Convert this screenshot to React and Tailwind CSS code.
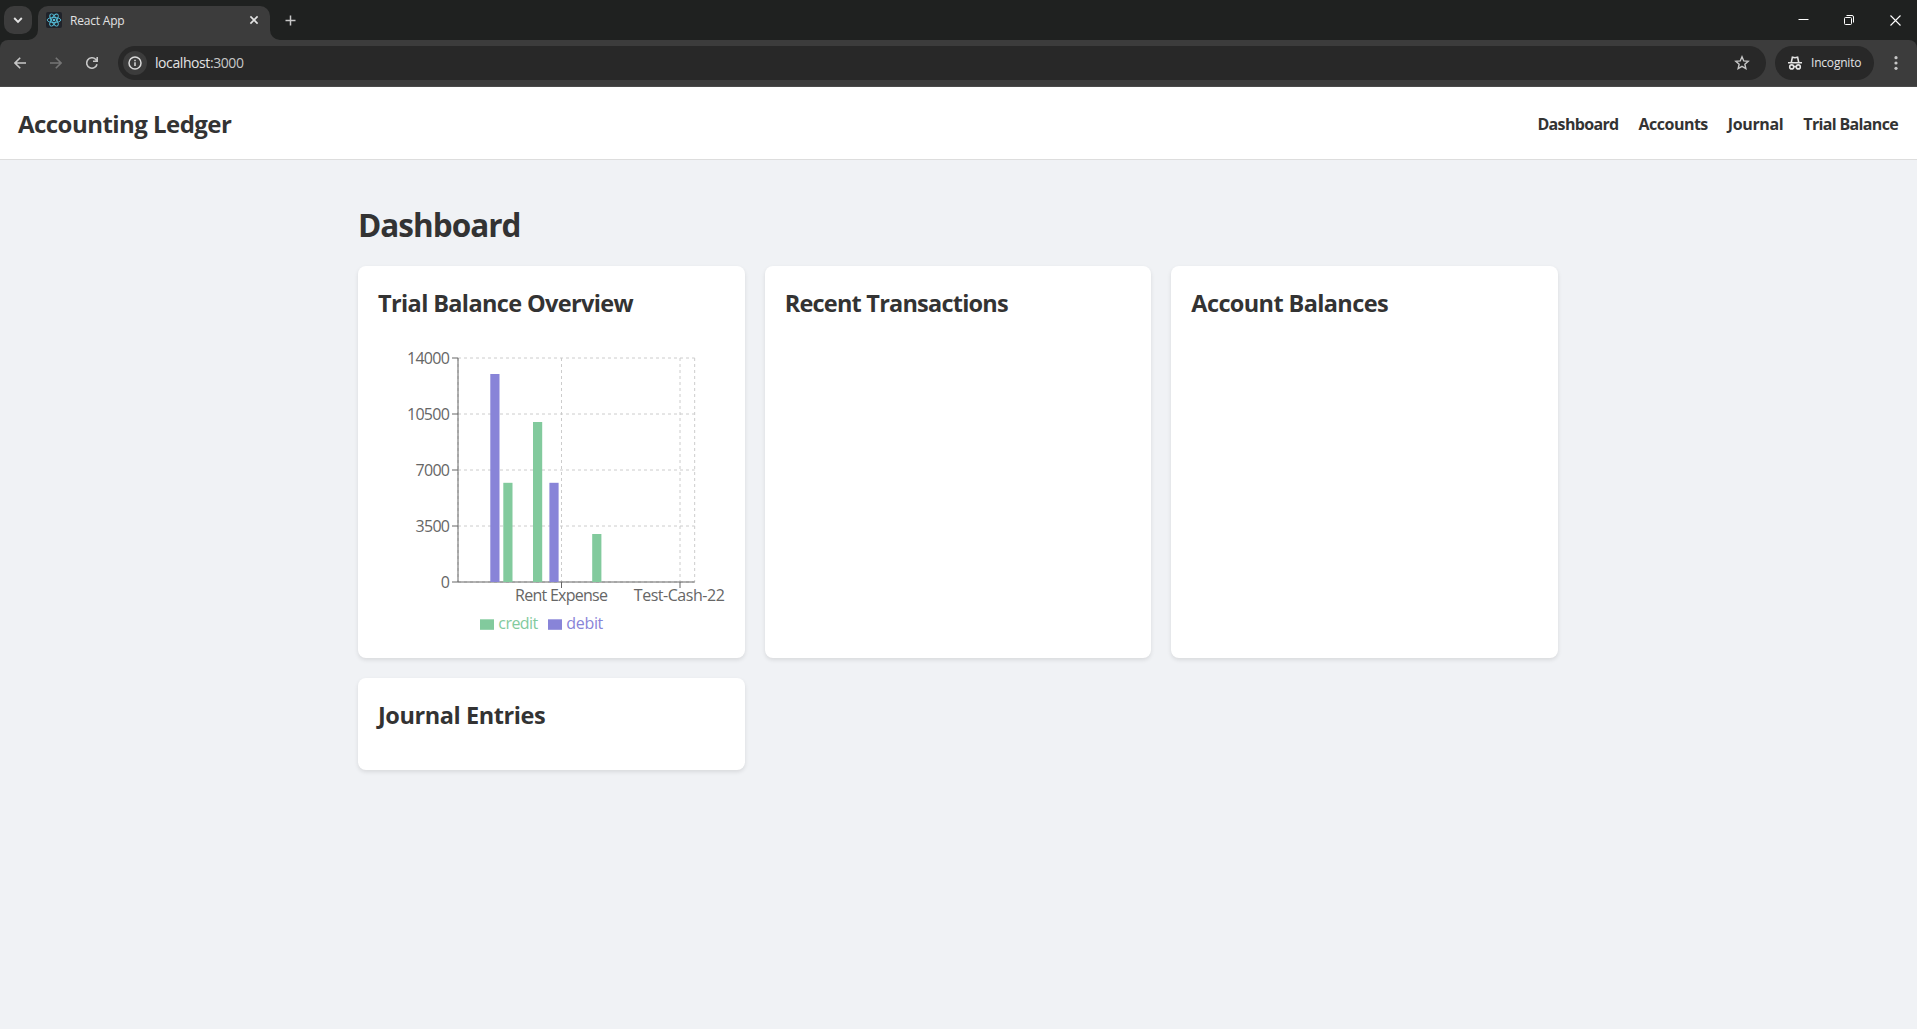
import React from "react";

const YTICKS = [14000, 10500, 7000, 3500, 0];
const PLOT = { left: 80, right: 316.67, top: 20, bottom: 244 };
const BARS = [
  { x: 112.3, value: 13000, fill: "#8884d8" },
  { x: 125.3, value: 6200, fill: "#82ca9d" },
  { x: 155, value: 10000, fill: "#82ca9d" },
  { x: 171.4, value: 6200, fill: "#8884d8" },
  { x: 214.2, value: 3000, fill: "#82ca9d" },
];
const XTICKS = [
  { x: 183.5, label: "Rent Expense", w: 93 },
  { x: 301.3, label: "Test-Cash-22", w: 91 },
];

function Chart() {
  return (
    <svg width="346" height="300" className="block overflow-visible text-base">
      <g stroke="#ccc" strokeDasharray="3 3">
        {YTICKS.map((t, i) => (
          <line key={t} x1={PLOT.left} x2={PLOT.right} y1={20 + i * 56} y2={20 + i * 56} />
        ))}
        {[80, 183.5, 302, 316.67].map((x) => (
          <line key={x} x1={x} x2={x} y1={PLOT.top} y2={PLOT.bottom} />
        ))}
      </g>
      <g stroke="#666">
        <line x1="80" x2="316.67" y1="244" y2="244" />
        <line x1="80" x2="80" y1="20" y2="244" />
        {YTICKS.map((t, i) => (
          <line key={t} x1="74" x2="80" y1={20 + i * 56} y2={20 + i * 56} />
        ))}
        <line x1="183.5" x2="183.5" y1="244" y2="250" />
        <line x1="302" x2="302" y1="244" y2="250" />
      </g>
      <g fill="#666">
        {YTICKS.map((t, i) => (
          <text key={t} x="72" y={26 + i * 56} textAnchor="end" textLength={String(t).length * 8.62}>
            {t}
          </text>
        ))}
        {XTICKS.map((t) => (
          <text key={t.label} x={t.x} y="263" textAnchor="middle" textLength={t.w}>
            {t.label}
          </text>
        ))}
      </g>
      {BARS.map((b) => (
        <rect key={b.x} x={b.x} y={244 - b.value * 0.016} width="9.2" height={b.value * 0.016} fill={b.fill} />
      ))}
      <rect x="102" y="281.3" width="14" height="10.5" fill="#82ca9d" />
      <text x="120.3" y="291.3" fill="#82ca9d" textLength="40">credit</text>
      <rect x="170" y="281.3" width="14" height="10.5" fill="#8884d8" />
      <text x="188.3" y="291.3" fill="#8884d8" textLength="37">debit</text>
    </svg>
  );
}

function Card({ title, tracking, children }) {
  return (
    <section className="rounded-lg bg-white p-5 shadow-[0_2px_4px_rgba(0,0,0,0.1)]">
      <h3 className={`mb-[19px] pt-px text-[23.5px] leading-8 font-bold whitespace-nowrap ${tracking}`}>{title}</h3>
      {children}
    </section>
  );
}

function ReactLogo() {
  return (
    <svg width="16" height="16" viewBox="0 0 16 16" fill="none" stroke="#56c1dc" strokeWidth="0.9">
      <rect width="16" height="16" rx="2" fill="#20232a" stroke="none" />
      <ellipse cx="8" cy="8" rx="6.8" ry="2.6" />
      <ellipse cx="8" cy="8" rx="6.8" ry="2.6" transform="rotate(60 8 8)" />
      <ellipse cx="8" cy="8" rx="6.8" ry="2.6" transform="rotate(120 8 8)" />
      <circle cx="8" cy="8" r="1.3" fill="#56c1dc" stroke="none" />
    </svg>
  );
}

function TabStrip() {
  return (
    <div className="flex h-10 bg-[#1f2120]">
      <button className="mt-1.5 ml-1 flex size-7 items-center justify-center rounded-[10px] bg-[#3c3c3c]">
        <svg width="10" height="10" viewBox="0 0 10 10" fill="none" stroke="#e3e3e3" strokeWidth="1.9"><path d="M1.2 3 5 6.8 8.8 3" /></svg>
      </button>
      <div className="relative mt-1.5 ml-1.5 flex h-[34px] w-[232px] items-center rounded-t-[10px] bg-[#3c3c3c] pr-[11px] pb-1.5 pl-2">
        <svg className="absolute bottom-0 -left-2.5" width="10" height="10"><path d="M10 0v10H0A10 10 0 0 0 10 0Z" fill="#3c3c3c" /></svg>
        <svg className="absolute -right-2.5 bottom-0" width="10" height="10"><path d="M0 0v10H10A10 10 0 0 1 0 0Z" fill="#3c3c3c" /></svg>
        <ReactLogo />
        <span className="ml-2 flex-1 pt-0.5 text-xs tracking-[-0.2px] text-[#e3e3e3]">React App</span>
        <svg width="10" height="10" viewBox="0 0 10 10" stroke="#e3e3e3" strokeWidth="1.6"><path d="m1.4 1.4 7.2 7.2m0-7.2-7.2 7.2" /></svg>
      </div>
      <svg className="mt-[15px] ml-[15px]" width="11" height="11" viewBox="0 0 11 11" stroke="#c7c7c7" strokeWidth="1.5"><path d="M5.5 .5v10M.5 5.5h10" /></svg>
      <div className="ml-auto flex items-start pt-[15px] pr-4">
        <svg className="mr-[35px]" width="11" height="10" stroke="#fff"><path d="M.5 4.5h10" /></svg>
        <svg className="mr-9" width="10" height="10" viewBox="0 0 10 10" fill="none" stroke="#fff"><rect x=".5" y="2.5" width="7" height="7" rx="1" /><path d="M2.5 .5H8A1.5 1.5 0 0 1 9.5 2v5.5" /></svg>
        <svg width="11" height="11" viewBox="0 0 11 11" stroke="#fff" strokeWidth="1.1"><path d="m.5 .5 10 10m0-10-10 10" /></svg>
      </div>
    </div>
  );
}

function Toolbar() {
  return (
    <div className="bg-[#1f2120]">
      <div className="flex h-[47px] items-start rounded-t-lg border-b border-[#4a4a4a] bg-[#3c3c3c] pt-1.5 pl-3.5">
        <div className="flex h-[34px] items-center">
          <svg width="12" height="12" viewBox="0 0 12 12" fill="none" stroke="#c7c7c7" strokeWidth="1.6"><path d="M12 6H1.2M6.2 .8 1 6l5.2 5.2" /></svg>
          <svg className="ml-6" width="12" height="12" viewBox="0 0 12 12" fill="none" stroke="#757575" strokeWidth="1.6"><path d="M0 6h10.8M5.8 .8 11 6l-5.2 5.2" /></svg>
          <svg className="ml-6" width="12" height="12" viewBox="0 0 12 12" fill="none" stroke="#c7c7c7" strokeWidth="1.6"><path d="M11 7.2A5.2 5.2 0 1 1 9.6 2.3L11 3.8M11.2 0v4.3H7" /></svg>
        </div>
        <div className="ml-5 flex h-[34px] w-[1648px] items-center rounded-full bg-[#282828] pr-4 pl-[5px]">
          <span className="flex size-6 items-center justify-center rounded-full bg-[#3c3c3c]">
            <svg width="14" height="14" viewBox="0 0 14 14" fill="none" stroke="#dadada" strokeWidth="1.5"><circle cx="7" cy="7" r="6" /><path d="M7 6.2V10M7 3.8v1.5" /></svg>
          </span>
          <span className="ml-2 flex-1 text-sm tracking-[-0.42px] text-[#e3e3e3]">localhost<span className="text-[#c7c7c7]">:3000</span></span>
          <svg width="16" height="16" viewBox="0 0 16 16" fill="none" stroke="#c7c7c7" strokeWidth="1.4"><path d="m8 1.8 1.75 4.1 4.45.4-3.35 2.95 1 4.35L8 11.3l-3.85 2.3 1-4.35L1.8 6.3l4.45-.4Z" /></svg>
        </div>
        <div className="ml-[9px] flex h-[34px] w-[99px] items-center rounded-full bg-[#282828] pl-[13px] text-[#e3e3e3]">
          <svg width="14" height="14" viewBox="0 0 14 14" fill="none" stroke="#e3e3e3" strokeWidth="1.6"><path d="M0 6.8h14M3.3 6.3 4.4 1.2 7 1.8 9.6 1.2 10.7 6.3" /><circle cx="3.7" cy="10.9" r="2" /><circle cx="10.3" cy="10.9" r="2" /><path d="M5.7 10.6h2.6" /></svg>
          <span className="ml-[9px] text-xs tracking-[-0.2px]">Incognito</span>
        </div>
        <svg className="mt-[10px] ml-5" width="4" height="14" fill="#c7c7c7"><circle cx="2" cy="1.7" r="1.6" /><circle cx="2" cy="7" r="1.6" /><circle cx="2" cy="12.3" r="1.6" /></svg>
      </div>
    </div>
  );
}

export default function App() {
  return (
    <div className="min-h-screen bg-[#f0f2f5] font-['Open_Sans',sans-serif] text-[#333]">
      <TabStrip />
      <Toolbar />
      <header className="flex h-[73px] items-center justify-between border-b border-[#ddd] bg-white pt-0.5 pr-[19px] pl-[18px]">
        <div className="text-2xl font-bold tracking-[-0.54px]">Accounting Ledger</div>
        <nav className="flex gap-5 text-base font-bold">
          <a className="tracking-[-0.65px]">Dashboard</a>
          <a className="tracking-[-0.52px]">Accounts</a>
          <a className="tracking-[-0.36px]">Journal</a>
          <a className="tracking-[-0.66px]">Trial Balance</a>
        </nav>
      </header>
      <main className="ml-[358px] w-[1200px] pt-[43px]">
        <h1 className="mb-5 text-[31.5px] leading-[43px] font-bold tracking-[-1px]">Dashboard</h1>
        <div className="grid grid-cols-3 gap-5">
          <Card title="Trial Balance Overview" tracking="tracking-[-0.63px]"><Chart /></Card>
          <Card title="Recent Transactions" tracking="tracking-[-0.78px]" />
          <Card title="Account Balances" tracking="tracking-[-0.62px]" />
          <Card title="Journal Entries" tracking="tracking-[-0.42px]" />
        </div>
      </main>
    </div>
  );
}
